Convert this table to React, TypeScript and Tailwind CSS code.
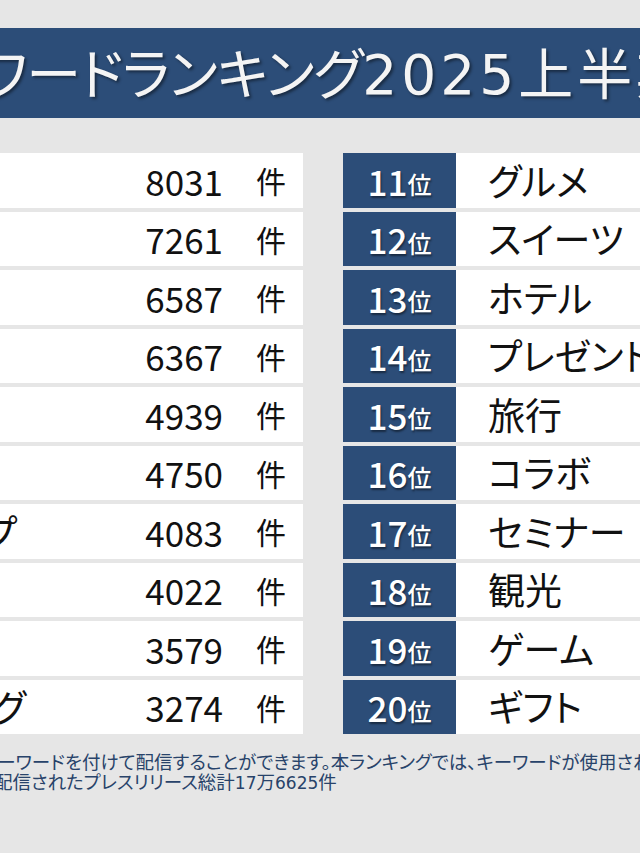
const left = [
  { label: '', end: 'w-[16px]', count: '8031' },
  { label: '', end: 'w-[16px]', count: '7261' },
  { label: '', end: 'w-[16px]', count: '6587' },
  { label: '', end: 'w-[16px]', count: '6367' },
  { label: '', end: 'w-[16px]', count: '4939' },
  { label: '', end: 'w-[16px]', count: '4750' },
  { label: 'ワークショップ', end: 'w-[17px]', count: '4083' },
  { label: '', end: 'w-[16px]', count: '4022' },
  { label: '', end: 'w-[16px]', count: '3579' },
  { label: 'マーケティング', end: 'w-[26px]', count: '3274' },
];

const right = ['グルメ', 'スイーツ', 'ホテル', 'プレゼント', '旅行', 'コラボ', 'セミナー', '観光', 'ゲーム', 'ギフト'];

export default function App() {
  return (
    <div className="w-[640px] h-[853px] overflow-hidden bg-[#e6e6e6] font-['Noto_Sans_CJK_JP',sans-serif] [font-feature-settings:'palt']">
      {/* title */}
      <div className="mt-[28px] h-[90px] bg-[#2c4d78] flex items-center overflow-hidden">
        <div className="-ml-[125px] whitespace-nowrap text-[55px] leading-none text-[#f4f4f4] [text-shadow:2px_2px_3px_rgba(0,0,0,0.45)]">
          <span className="tracking-[-1px]">キーワードランキング</span>
          <span className="font-['DejaVu_Sans',sans-serif] tracking-[4px]">2025</span>
          <span className="tracking-[4px]">上半期</span>
        </div>
      </div>

      {/* table */}
      <div className="mt-[35px] flex gap-[40px]">
        <div className="w-[303px] flex flex-col gap-[4px] shrink-0">
          {left.map((r) => (
            <div key={r.count} className="h-[54.5px] bg-white flex items-center overflow-hidden">
              <div className={`${r.end} shrink-0 flex justify-end whitespace-nowrap text-[37px] text-[#111]`}>
                {r.label && <span>{r.label}</span>}
              </div>
              <div className="flex-1" />
              <div className="text-[35px] leading-none text-[#111]">{r.count}</div>
              <div className="ml-[33px] mr-[17px] text-[30px] leading-none text-[#111]">件</div>
            </div>
          ))}
        </div>
        <div className="w-[400px] shrink-0 flex flex-col gap-[4px]">
          {right.map((name, i) => (
            <div key={name} className="h-[54.5px] flex">
              <div className="w-[113px] bg-[#2c4d78] flex items-center justify-center text-white [text-shadow:1px_2px_2px_rgba(0,0,0,0.45)]">
                <span className="text-[35px] font-medium leading-none">{i + 11}</span>
                <span className="text-[24px] font-medium leading-none mt-[8px]">位</span>
              </div>
              <div className="flex-1 bg-white flex items-center pl-[32px] whitespace-nowrap text-[37px] text-[#111]">
                {name}
              </div>
            </div>
          ))}
        </div>
      </div>

      {/* note */}
      <div className="mt-[17px] whitespace-nowrap text-[18.5px] leading-[20px] text-[#28436a]">
        <p className="-ml-[20px]">キーワードを付けて配信することができます。本ランキングでは、キーワードが使用された</p>
        <p className="-ml-[6px]">
          配信されたプレスリリース総計<span className="font-['DejaVu_Sans',sans-serif] text-[17px]">17</span>万
          <span className="font-['DejaVu_Sans',sans-serif] text-[17px]">6625</span>件
        </p>
      </div>
    </div>
  );
}
